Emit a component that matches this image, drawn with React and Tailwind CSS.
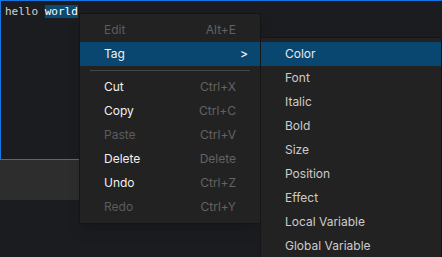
import React from 'react';

const mainItems = [
  { label: 'Edit', shortcut: 'Alt+E', disabled: true },
  { label: 'Tag', submenu: true, active: true },
  { separator: true },
  { label: 'Cut', shortcut: 'Ctrl+X' },
  { label: 'Copy', shortcut: 'Ctrl+C' },
  { label: 'Paste', shortcut: 'Ctrl+V', disabled: true },
  { label: 'Delete', shortcut: 'Delete' },
  { label: 'Undo', shortcut: 'Ctrl+Z' },
  { label: 'Redo', shortcut: 'Ctrl+Y', disabled: true },
];

const tagItems = ['Color', 'Font', 'Italic', 'Bold', 'Size', 'Position', 'Effect', 'Local Variable', 'Global Variable'];

export default function App() {
  return (
    <div className="relative w-[442px] h-[257px] overflow-hidden bg-[#1b1c1f] font-['Inter','Liberation_Sans',sans-serif]">
      {/* --- EDITOR --- */}
      <div className="flex flex-col w-[460px]">
        <div className="h-[160px] border border-r-0 border-[#1177e6] bg-[#1b1c1f] px-[4px] pt-[4px]">
          <p className="font-['DejaVu_Sans_Mono',monospace] text-[11px] leading-[14px] text-[#d4d4d4]">
            hello <span className="bg-[#0b4a72] text-white">world</span>
          </p>
        </div>
        <div className="h-[40px] bg-[#2d2d2d]" />
      </div>

      {/* --- CONTEXT MENU --- */}
      <div className="absolute left-[79px] top-[13px] w-[182px] bg-[#222222] border border-[#151515] py-[4px] text-[12px] shadow-lg">
        {mainItems.map((item, i) =>
          item.separator ? (
            <div key={i} className="mx-[10px] my-[4px] h-px bg-[#474747]" />
          ) : (
            <div
              key={i}
              className={`flex items-center justify-between h-[24px] pl-[24px] ${item.submenu ? 'pr-[12px]' : 'pr-[24px]'} ${item.active ? 'bg-[#094771]' : ''}`}
            >
              <span className={item.disabled ? 'text-[#5c5c5c]' : 'text-[#f0f0f0]'}>{item.label}</span>
              {item.submenu ? (
                <span className="text-[#f0f0f0] font-medium">&gt;</span>
              ) : (
                <span className="text-[#636363]">{item.shortcut}</span>
              )}
            </div>
          )
        )}
      </div>

      {/* --- TAG SUBMENU --- */}
      <div className="absolute left-[260px] top-[37px] w-[182px] bg-[#222222] border border-[#151515] py-[4px] text-[12px]">
        {tagItems.map((label, i) => (
          <div key={label} className={`flex items-center h-[24px] pl-[24px] text-[#cccccc] ${i === 0 ? 'bg-[#094771] text-[#e8e8e8]' : ''}`}>
            {label}
          </div>
        ))}
      </div>
    </div>
  );
}
